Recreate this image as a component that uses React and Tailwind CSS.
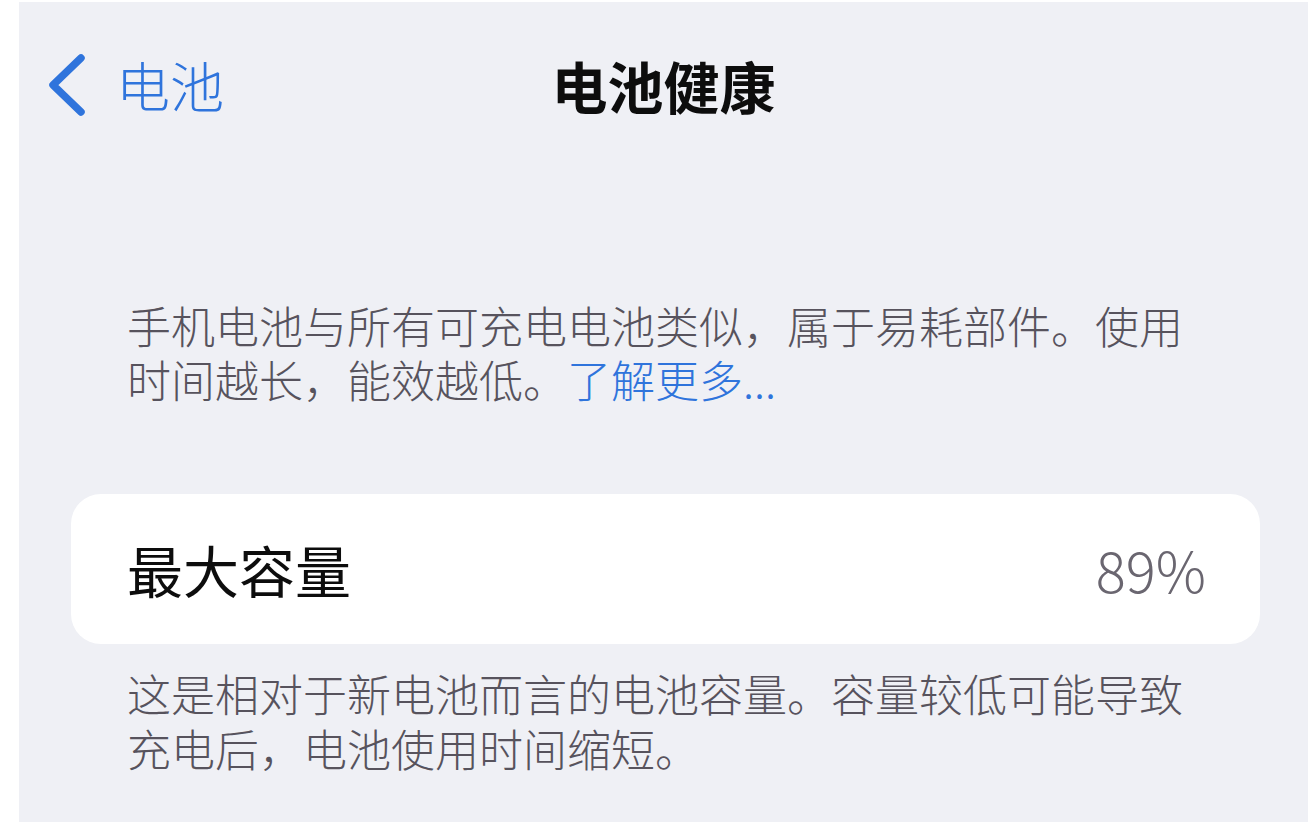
import React from "react";

const font = { fontFamily: '"Noto Sans CJK SC", "Noto Sans", sans-serif' };

const BackChevron = () => (
  <svg width="38" height="64" viewBox="0 0 38 64" fill="none">
    <path
      d="M33 5 L5 32 L33 59"
      stroke="#2f74dc"
      strokeWidth="7.5"
      strokeLinecap="round"
      strokeLinejoin="round"
    />
  </svg>
);

export default function App() {
  return (
    <div className="w-[1310px] h-[824px] bg-white overflow-hidden" style={font}>
      <div className="ml-[19px] mt-[2px] w-[1289px] h-[820px] bg-[#eff0f5] flex flex-col">
        {/* Nav bar */}
        <div className="grid grid-cols-[1fr_auto_1fr] items-center h-[166px]">
          <div className="flex items-center pl-[29px] gap-[30px]">
            <BackChevron />
            <span className="text-[54px] leading-none font-light text-[#2f74dc]">电池</span>
          </div>
          <h1 className="text-[56px] leading-none font-bold text-[#0d0d0d]">电池健康</h1>
          <div />
        </div>

        {/* Intro text */}
        <p className="mt-[130px] ml-[108px] w-[1080px] text-[44px] leading-[54px] font-light text-[#57535d]">
          手机电池与所有可充电电池类似，属于易耗部件。使用时间越长，能效越低。
          <span className="text-[#2f74dc]">了解更多...</span>
        </p>

        {/* Capacity card */}
        <div className="mt-[88px] ml-[52px] w-[1189px] h-[150px] bg-white rounded-[30px] flex items-center justify-between pl-[56px] pr-[54px]">
          <span className="text-[56px] leading-none font-normal text-[#0d0d0d]">最大容量</span>
          <span className="text-[56px] leading-none font-light text-[#6a6670]">89%</span>
        </div>

        {/* Footer text */}
        <p className="mt-[22px] ml-[108px] w-[1080px] text-[44px] leading-[55px] font-light text-[#57535d]">
          这是相对于新电池而言的电池容量。容量较低可能导致充电后，电池使用时间缩短。
        </p>
      </div>
    </div>
  );
}
